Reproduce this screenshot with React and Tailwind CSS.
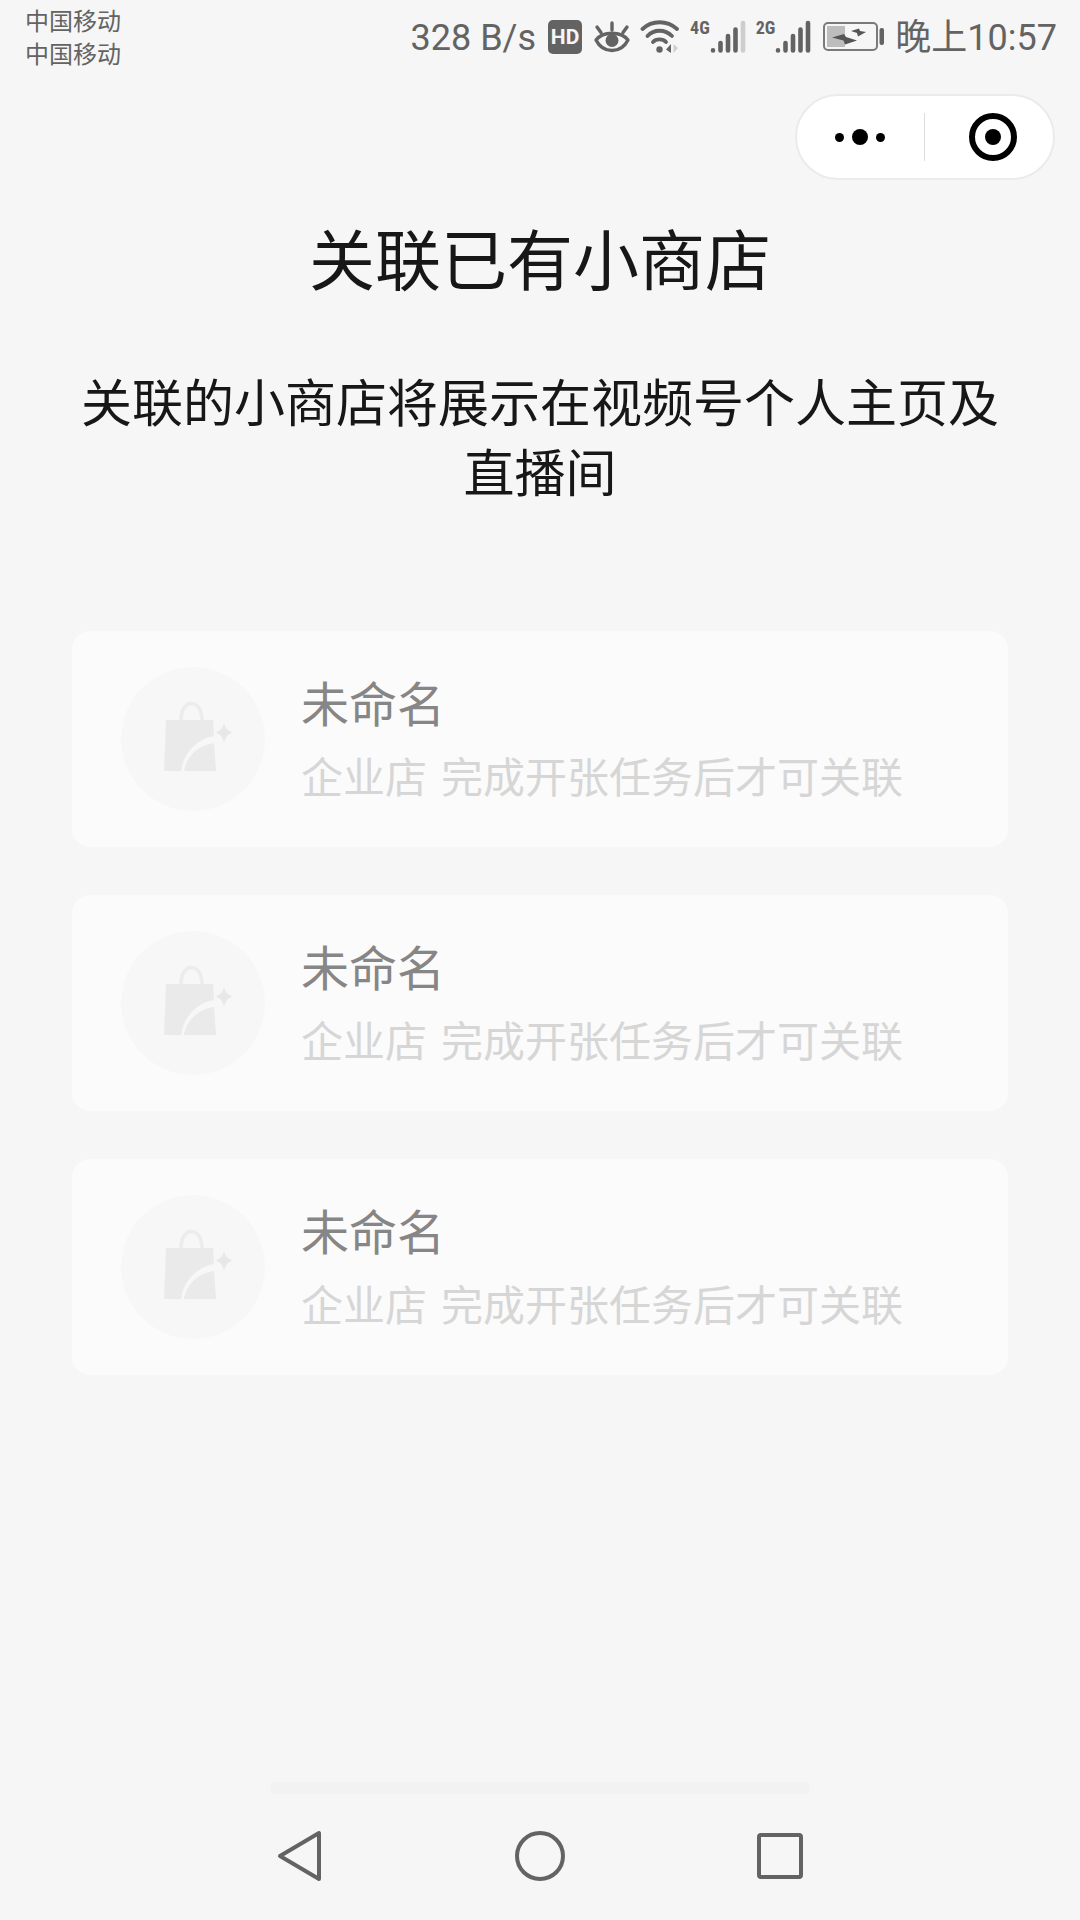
const stores = [
  { id: 1, name: "未命名", kind: "企业店", note: "完成开张任务后才可关联" },
  { id: 2, name: "未命名", kind: "企业店", note: "完成开张任务后才可关联" },
  { id: 3, name: "未命名", kind: "企业店", note: "完成开张任务后才可关联" },
];

function EyeIcon() {
  return (
    <svg width="36" height="34" viewBox="0 0 36 34" fill="none" stroke="#636363" strokeWidth="3.400" strokeLinecap="round" aria-hidden="true">
      <path d="M2 20C9 11 27 11 34 20C27 34 9 34 2 20Z" strokeLinejoin="round" />
      <circle cx="18" cy="20.500" r="6.500" fill="#636363" stroke="none" />
      <path d="M18 3V10M3 7L7 12.500M33 7L29 12.500" />
    </svg>
  );
}

function WifiIcon() {
  return (
    <svg width="40" height="34" viewBox="0 0 40 34" fill="none" stroke="#636363" strokeWidth="3.800" strokeLinecap="round" aria-hidden="true">
      <path d="M2.500 9C12 0 27 0 37 9" />
      <path d="M7.500 16C14 9 25 9 32 16" />
      <path d="M13 22C16 18.500 23 18.500 26 22" />
      <circle cx="19.500" cy="29.500" r="3.200" fill="#636363" stroke="none" />
      <path d="M31 24V33L26 29.500Z" fill="#636363" stroke="none" />
      <path d="M33.500 24V33L38 28Z" fill="#cfcfcf" stroke="none" />
    </svg>
  );
}

function Signal({ label, weakLast }) {
  return (
    <span className="flex items-start">
      <span className="font-['Roboto_Condensed',Roboto,sans-serif] text-[18px] leading-[16px] font-bold">{label}</span>
      <svg width="36" height="34" viewBox="0 0 36 34" fill="none" stroke="#636363" strokeWidth="4.600" strokeLinecap="round" aria-hidden="true">
        <path d="M3 30.500V30.400M10.500 30.500V23M18 30.500V16M25.500 30.500V9.500" />
        <path d="M33 30.500V3" stroke={weakLast ? "#cdcdcd" : "#636363"} />
      </svg>
    </span>
  );
}

function BatteryIcon() {
  return (
    <svg width="62" height="30" viewBox="0 0 62 30" aria-hidden="true">
      <rect x="1" y="1" width="53" height="27" rx="4" fill="none" stroke="#7a7a7a" strokeWidth="2" />
      <rect x="4" y="4" width="18" height="21" fill="#bdbdbd" />
      <rect x="56.500" y="6" width="4.500" height="17" rx="2" fill="#636363" />
      <path d="M9 15.500L21 12L23 15L34 18.500L22 22.500L20.500 18.500Z" fill="#555" />
      <path d="M28 9L36 6.500L37 9L43 10L35 14.500L34 11Z" fill="#555" />
    </svg>
  );
}

function StatusBar() {
  return (
    <header className="flex h-[72px] items-start justify-between pr-[23px] pl-[25px] text-[#636363]">
      <div className="pt-[3px] text-[24px] leading-[33px]">
        <p>中国移动</p>
        <p>中国移动</p>
      </div>
      <div className="flex h-[74px] items-center font-[Roboto,'Noto_Sans_CJK_SC',sans-serif] text-[36px] leading-[44px]">
        <span className="mr-3 pt-0.5">328 B/s</span>
        <span className="mr-3 flex size-[34px] items-center justify-center rounded-[5px] bg-[#636363] text-[21px] font-bold text-[#f6f6f6]">HD</span>
        <span className="mr-[10px]"><EyeIcon /></span>
        <span className="mr-[10px]"><WifiIcon /></span>
        <span className="mr-[10px]"><Signal label="4G" weakLast /></span>
        <span className="mr-3"><Signal label="2G" /></span>
        <span className="mr-[10px]"><BatteryIcon /></span>
        <span className="pt-0.5">晚上10:57</span>
      </div>
    </header>
  );
}

function Capsule() {
  return (
    <div className="mt-[22px] mr-[25px] flex h-[86px] w-[260px] items-center self-end rounded-full border-2 border-[#ebebeb] bg-white">
      <button type="button" aria-label="更多" className="flex h-full w-1/2 items-center justify-center gap-2 pr-0.5">
        <span className="size-[9px] rounded-full bg-black" />
        <span className="size-4 rounded-full bg-black" />
        <span className="size-[9px] rounded-full bg-black" />
      </button>
      <span className="h-12 w-px shrink-0 bg-[#dcdcdc]" />
      <button type="button" aria-label="关闭" className="flex h-full w-1/2 items-center justify-center pl-2">
        <span className="flex size-12 items-center justify-center rounded-full border-[6px] border-black">
          <span className="size-4 rounded-full bg-black" />
        </span>
      </button>
    </div>
  );
}

function BagIcon() {
  return (
    <svg width="144" height="144" viewBox="0 0 144 144" aria-hidden="true">
      <circle cx="72" cy="72" r="72" fill="#f7f7f7" />
      <path d="M60 53C60 31 81 31 81 53" fill="none" stroke="#ececec" strokeWidth="3.500" />
      <path d="M45 53H92L93 69C75 72 62 87 60 104H43Z" fill="#eaeaea" />
      <path d="M93 76L95 104H63C65 90 77 78 93 76Z" fill="#eaeaea" />
      <path d="M103 56Q104.500 64 112 65.500Q104.500 67 103 76Q101.500 67 94 65.500Q101.500 64 103 56Z" fill="#e8e8e8" />
    </svg>
  );
}

function StoreCard({ store }) {
  return (
    <li>
      <button type="button" disabled className="flex h-[216px] w-full items-center gap-9 rounded-[18px] bg-[#fbfbfb] pl-[49px] text-left">
        <BagIcon />
        <span className="flex flex-col">
          <span className="text-[48px] leading-[72px] text-[#868686]">{store.name}</span>
          <span className="flex flex-wrap gap-x-[14px] text-[42px] leading-[76px] text-[#d6d6d6]">
            <span>{store.kind}</span>
            <span>{store.note}</span>
          </span>
        </span>
      </button>
    </li>
  );
}

function NavBar() {
  return (
    <nav className="flex h-[126px] items-center justify-center gap-[144px] pb-0.5">
      <button type="button" aria-label="返回" className="flex size-24 items-center justify-center">
        <svg width="52" height="52" viewBox="0 0 52 52" fill="none" stroke="#636363" strokeWidth="4" strokeLinejoin="round" aria-hidden="true">
          <path d="M6 26L45 3V49Z" />
        </svg>
      </button>
      <button type="button" aria-label="主页" className="flex size-24 items-center justify-center">
        <span className="size-[50px] rounded-full border-4 border-[#636363]" />
      </button>
      <button type="button" aria-label="最近任务" className="flex size-24 items-center justify-center">
        <span className="size-[46px] rounded-[4px] border-4 border-[#636363]" />
      </button>
    </nav>
  );
}

export default function App() {
  return (
    <div className="flex min-h-screen flex-col bg-[#f6f6f6] font-['Noto_Sans_CJK_SC',sans-serif] text-[#171717]">
      <StatusBar />
      <Capsule />
      <main className="px-[72px] pt-8 text-center">
        <h1 className="text-[66px] leading-[88px]">关联已有小商店</h1>
        <p className="mt-[65px] text-[51px] leading-[70px]">关联的小商店将展示在视频号个人主页及直播间</p>
        <ul className="mt-[126px] flex flex-col gap-12">
          {stores.map((store) => (
            <StoreCard key={store.id} store={store} />
          ))}
        </ul>
      </main>
      <footer className="mt-auto">
        <div className="mx-auto h-3 w-1/2 rounded-full bg-[#f2f2f2]" />
        <NavBar />
      </footer>
    </div>
  );
}
